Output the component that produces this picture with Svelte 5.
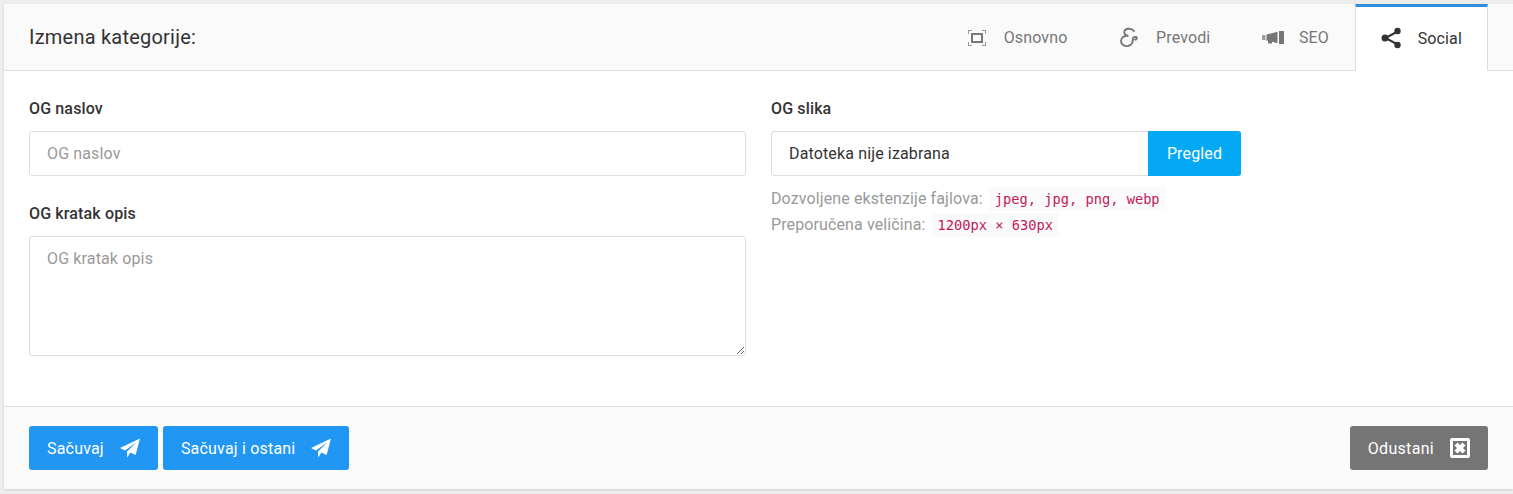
<script>
  const tabs = [
    { label: 'Osnovno', icon: 'frame' },
    { label: 'Prevodi', icon: 'amp' },
    { label: 'SEO', icon: 'horn' },
    { label: 'Social', icon: 'share', active: true }
  ];
</script>

{#snippet plane()}
  <svg viewBox="0 0 20 20" width="20" height="20" aria-hidden="true">
    <path d="M20 0.5 L15.6 17 L10.4 14.4 L7.2 19.5 L7 13.6 L16.5 4.2 L5 12.4 L0 10 Z" fill="currentColor" />
  </svg>
{/snippet}

<div class="card">
  <header class="card-head">
    <h1>Izmena kategorije:</h1>
    <nav class="tabs">
      {#each tabs as tab}
        <a href="#top" class="tab" class:active={tab.active}>
          {#if tab.icon === 'frame'}
            <svg viewBox="-1 0 20 16" width="20" height="16" aria-hidden="true">
              <path d="M0 0h4v1H1v3H0zM14 0h4v4h-1V1h-3zM0 12h1v3h3v1H0zM17 12h1v4h-4v-1h3z" fill="currentColor" opacity=".75" />
              <path d="M3 3h12v10H3zM5 5v6h8V5z" fill="currentColor" fill-rule="evenodd" />
            </svg>
          {:else if tab.icon === 'amp'}
            <svg viewBox="0 0 20 22" width="20" height="22" aria-hidden="true">
              <path d="M15 4C13 1.500 7 .5 5.500 4 4.500 6.500 6.500 8.800 9.500 8.800 5 8.600 2 10.500 2 14c0 3.500 3.500 5.500 7 5 3.500-.6 5-4 4.800-7-.1-1.500 1.200-2.500 3.200-2 1.500.5.8 3-1.200 2.500" fill="none" stroke="currentColor" stroke-width="1.900" stroke-linecap="round" />
            </svg>
          {:else if tab.icon === 'horn'}
            <svg class="wide" viewBox="0 0 22 13" width="22" height="13" aria-hidden="true">
              <path d="M0 4h3.500v5H0z" fill="currentColor" opacity=".7" />
              <path d="M4.500 3.500 15.500 .8V12.200L10 10.800V12.500H6V9.800L4.500 9.500z" fill="currentColor" />
              <path d="M17 0h5v13h-5z" fill="currentColor" />
            </svg>
          {:else}
            <svg viewBox="0 0 20 22" width="20" height="22" aria-hidden="true">
              <path d="M16.500 4.500 4.500 11l12 6.500" fill="none" stroke="currentColor" stroke-width="2" />
              <circle cx="16.500" cy="4" r="3.200" fill="currentColor" />
              <circle cx="4" cy="11" r="3.500" fill="currentColor" />
              <circle cx="16.500" cy="18" r="3.200" fill="currentColor" />
            </svg>
          {/if}
          <span>{tab.label}</span>
        </a>
      {/each}
    </nav>
  </header>

  <div class="card-body">
    <div class="col-left">
      <div class="field">
        <label for="og-title">OG naslov</label>
        <input id="og-title" type="text" placeholder="OG naslov" />
      </div>
      <div class="field">
        <label for="og-desc">OG kratak opis</label>
        <textarea id="og-desc" placeholder="OG kratak opis"></textarea>
      </div>
    </div>
    <div class="col-right">
      <div class="label">OG slika</div>
      <div class="file">
        <span class="file-name">Datoteka nije izabrana</span>
        <span class="file-btn">Pregled</span>
      </div>
      <div class="hint">
        <div>Dozvoljene ekstenzije fajlova: <code>jpeg, jpg, png, webp</code></div>
        <div>Preporučena veličina: <code>1200px × 630px</code></div>
      </div>
    </div>
  </div>

  <footer class="card-foot">
    <div class="btns">
      <button class="btn primary">Sačuvaj {@render plane()}</button>
      <button class="btn primary">Sačuvaj i ostani {@render plane()}</button>
    </div>
    <button class="btn muted">
      Odustani
      <svg viewBox="0 0 20 20" width="20" height="20" aria-hidden="true">
        <path fill-rule="evenodd" d="M2 0h16a2 2 0 0 1 2 2v16a2 2 0 0 1-2 2H2a2 2 0 0 1-2-2V2a2 2 0 0 1 2-2zM3 3v14h14V3z" fill="currentColor" />
        <path d="M4.500 7.500 7 10l-2.500 2.500 3 3L10 13l2.500 2.500 3-3L13 10l2.500-2.500-3-3L10 7 7.500 4.500z" fill="currentColor" />
      </svg>
    </button>
  </footer>
</div>

<style>
  :global(body) { background: #eeeded; font-family: Roboto, sans-serif; font-size: 16px; letter-spacing: .14px; color: #333; overflow: hidden; }
  .card { margin: 4px 0 5px 4px; height: 485px; background: #fff; box-shadow: 0 1px 2px rgba(0,0,0,.12); display: flex; flex-direction: column; box-sizing: border-box; }
  .card-head { height: 67px; box-sizing: border-box; background: #fafafa; border-bottom: 1px solid #ddd; display: flex; justify-content: space-between; padding: 0 25px; }
  h1 { margin: 0; font-size: 20px; font-weight: 400; line-height: 66px; letter-spacing: .22px; color: #333; }
  .tabs { display: flex; }
  .tab { display: flex; align-items: center; gap: 17px; padding: 1px 25.75px 0; text-decoration: none; color: #777; }
  .tab.active { color: #333; background: #fff; border: 1px solid #ddd; border-top: 3px solid #2f8fdc; border-bottom: 0; height: 67px; box-sizing: border-box; padding: 0 25px 2px; }
  .wide { margin-right: -2px; }
  .card-body { flex: 1; display: flex; gap: 25px; padding: 25px; }
  .col-left { width: 717px; display: flex; flex-direction: column; gap: 25px; }
  .col-right { width: 470px; }
  .field { display: flex; flex-direction: column; }
  label, .label { display: block; font-weight: 500; line-height: 24px; padding-top: 1px; margin-bottom: 10px; color: #333; }
  input, textarea { font: inherit; letter-spacing: inherit; color: #333; border: 1px solid #ddd; border-radius: 3px; padding: 10px 17px; box-sizing: border-box; outline: 0; background: #fff; width: 100%; }
  input { height: 45px; }
  textarea { height: 120px; display: block; padding-top: 12px; }
  input::placeholder, textarea::placeholder { color: #999; opacity: 1; }
  .file { display: flex; height: 45px; border: 1px solid #ddd; border-radius: 3px; box-sizing: border-box; }
  .file-name { flex: 1; padding: 0 17px; line-height: 43px; }
  .file-btn { background: #03a9f4; color: #fff; width: 93px; margin: -1px; text-align: center; line-height: 45px; border-radius: 0 3px 3px 0; }
  .hint { color: #999; margin-top: 10px; line-height: 25px; letter-spacing: .11px; }
  code { font-family: "DejaVu Sans Mono", monospace; font-size: 13.7px; letter-spacing: 0; color: #c2185b; background: #fafafa; padding: 4px 6px; margin-left: 2px; }
  .card-foot { height: 83px; box-sizing: border-box; background: #fafafa; border-top: 1px solid #ddd; display: flex; justify-content: space-between; align-items: flex-start; padding: 19px 25px 0; }
  .btns { display: flex; gap: 5px; }
  .btn { font: inherit; height: 44px; border: 0; border-radius: 3px; color: #fff; display: flex; align-items: center; gap: 16px; padding: 0 18px; }
  .primary { background: #2196f3; letter-spacing: .19px; }
  .muted { background: #757575; letter-spacing: .3px; }
</style>
